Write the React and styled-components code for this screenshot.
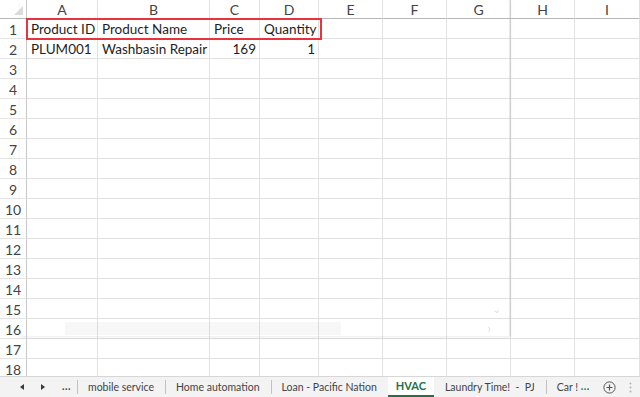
import styled, { createGlobalStyle } from 'styled-components';

const GlobalStyle = createGlobalStyle`
  html, body {
    margin: 0;
    padding: 0;
    background: #ffffff;
  }
  #root {
    width: 640px;
    height: 397px;
  }
`;

const COLS = [71, 112, 50, 59, 64, 64, 64, 64, 65];
const LETTERS = ['A', 'B', 'C', 'D', 'E', 'F', 'G', 'H', 'I'];
const ROWS = 18;

const DATA = {
  1: ['Product ID', 'Product Name', 'Price', 'Quantity'],
  2: ['PLUM001', 'Washbasin Repair', '169', '1'],
};

const RIGHT = { '169': true, '1': true };

const Window = styled.div`
  width: 640px;
  height: 397px;
  display: flex;
  flex-direction: column;
  overflow: hidden;
  font-family: Lato, 'Open Sans', sans-serif;
  position: relative;
`;

const SheetArea = styled.div`
  flex: 1;
  overflow: hidden;
  position: relative;
`;

const Grid = styled.div`
  display: grid;
  grid-template-columns: 27px ${COLS.map((c) => `${c}px`).join(' ')};
  grid-auto-rows: 20px;
  grid-template-rows: 19px;
`;

const Corner = styled.div`
  border-right: 1px solid #c8c8c8;
  border-bottom: 1px solid #b8b8b8;
  position: relative;
  &::after {
    content: '';
    position: absolute;
    right: 3px;
    bottom: 3px;
    border-style: solid;
    border-width: 0 0 9px 9px;
    border-color: transparent transparent #dcdcdc transparent;
  }
`;

const ColHead = styled.div`
  border-right: 1px solid #e0e0e0;
  border-bottom: 1px solid #b8b8b8;
  color: #444;
  font-size: 14px;
  display: flex;
  align-items: center;
  justify-content: center;
  padding-top: 1px;
`;

const RowHead = styled.div`
  border-right: 1px solid #c8c8c8;
  border-bottom: 1px solid #e4e4e4;
  color: #444;
  font-size: 14px;
  display: flex;
  align-items: center;
  justify-content: center;
  padding-top: 1px;
`;

const Cell = styled.div`
  border-right: 1px solid #e1e1e1;
  border-bottom: 1px solid #e1e1e1;
  font-size: 13.5px;
  color: #1e1e1e;
  display: flex;
  align-items: flex-end;
  justify-content: ${(p) => (p.$right ? 'flex-end' : 'flex-start')};
  padding: 0 3px 1px 4px;
  white-space: nowrap;
  overflow: hidden;
`;

const Highlight = styled.div`
  position: absolute;
  left: 26px;
  top: 18px;
  width: 296px;
  height: 22px;
  box-sizing: border-box;
  border: 2px solid #e8323c;
  pointer-events: none;
`;

const Ghost = styled.div`
  position: absolute;
  left: 20px;
  top: 0;
  width: 491px;
  height: 336px;
  box-sizing: border-box;
  border-right: 2px solid rgba(120, 120, 120, 0.16);
  box-shadow: 0 2px 3px rgba(0, 0, 0, 0.06);
  pointer-events: none;
  display: flex;
  flex-direction: column;
  justify-content: flex-end;
`;

const GhostScroll = styled.div`
  height: 16px;
  display: flex;
  align-items: center;
  padding-left: 45px;
`;

const GhostThumb = styled.div`
  width: 276px;
  height: 13px;
  background: rgba(200, 200, 200, 0.14);
`;

const GhostArrow = styled.span`
  margin-left: auto;
  margin-right: 18px;
  color: rgba(120, 120, 120, 0.25);
  font-size: 13px;
`;

const GhostDown = styled.span`
  position: absolute;
  right: 8px;
  bottom: 20px;
  color: rgba(120, 120, 120, 0.25);
  font-size: 11px;
`;

const TabBar = styled.div`
  height: 20px;
  flex: none;
  background: #f3f3f3;
  border-top: 1px solid #d6d6d6;
  display: flex;
  align-items: stretch;
  font-family: Lato, 'Open Sans', sans-serif;
  font-size: 10.5px;
  color: #444;
  position: relative;
  z-index: 2;
`;

const Nav = styled.div`
  display: flex;
  align-items: center;
  padding-left: 20px;
  gap: 17px;
  width: 57px;
  flex: none;
`;

const Tri = styled.span`
  width: 0;
  height: 0;
  border-top: 3px solid transparent;
  border-bottom: 3px solid transparent;
  ${(p) =>
    p.$left
      ? 'border-right: 4px solid #3a3a3a;'
      : 'border-left: 4px solid #3a3a3a;'}
`;

const Dots = styled.span`
  color: ${(p) => (p.$green ? '#217346' : '#444')};
  font-weight: bold;
  letter-spacing: 0.5px;
  line-height: 1;
  margin-top: -2px;
`;

const Tabs = styled.div`
  flex: 1;
  display: flex;
  overflow: hidden;
`;

const Tab = styled.div`
  display: flex;
  align-items: center;
  padding: 0 11px;
  position: relative;
  white-space: nowrap;
  flex: none;
  ${(p) =>
    p.$sep &&
    `&::before {
      content: '';
      position: absolute;
      left: 0;
      top: 3px;
      bottom: 3px;
      border-left: 1px solid #c2c2c2;
    }`}
  ${(p) =>
    p.$active &&
    `background: #ffffff;
     color: #217346;
     font-weight: bold;
     font-size: 11px;
     margin-top: -1px;
     border-bottom: 2px solid #217346;
     padding: 0 8px;`}
  ${(p) => p.$last && 'padding-right: 0;'}
`;

const Tools = styled.div`
  width: 44px;
  box-sizing: border-box;
  display: flex;
  align-items: center;
  gap: 13px;
  padding-left: 7px;
  flex: none;
`;

const PlusIcon = () => (
  <svg width="13" height="13" viewBox="0 0 13 13">
    <circle cx="6.5" cy="6.5" r="5.6" fill="none" stroke="#555" strokeWidth="1" />
    <path d="M6.5 3.5v6M3.5 6.5h6" stroke="#555" strokeWidth="1.2" />
  </svg>
);

const KebabIcon = () => (
  <svg width="3" height="11" viewBox="0 0 3 11">
    <circle cx="1.5" cy="1.5" r="1" fill="#b4b4b4" />
    <circle cx="1.5" cy="5.5" r="1" fill="#b4b4b4" />
    <circle cx="1.5" cy="9.5" r="1" fill="#b4b4b4" />
  </svg>
);

const App = () => {
  const rows = Array.from({ length: ROWS }, (_, i) => i + 1);

  return (
    <>
      <GlobalStyle />
      <Window>
        <SheetArea>
          <Grid>
            <Corner />
            {LETTERS.map((l) => (
              <ColHead key={l}>{l}</ColHead>
            ))}
            {rows.flatMap((r) => [
              <RowHead key={`h${r}`}>{r}</RowHead>,
              ...LETTERS.map((l, ci) => {
                const v = (DATA[r] || [])[ci] || '';
                return (
                  <Cell key={`${l}${r}`} $right={r === 2 && RIGHT[v]}>
                    {v}
                  </Cell>
                );
              }),
            ])}
          </Grid>
          <Ghost>
            <GhostDown>⌄</GhostDown>
            <GhostScroll>
              <GhostThumb />
              <GhostArrow>›</GhostArrow>
            </GhostScroll>
          </Ghost>
          <Highlight />
        </SheetArea>
        <TabBar>
          <Nav>
            <Tri $left />
            <Tri />
            <Dots>...</Dots>
          </Nav>
          <Tabs>
            <Tab $sep>mobile service</Tab>
            <Tab $sep>Home automation</Tab>
            <Tab $sep>Loan - Pacific Nation</Tab>
            <Tab $active>HVAC</Tab>
            <Tab>Laundry Time!&nbsp; -&nbsp; PJ</Tab>
            <Tab $sep $last>
              Car !&nbsp;<Dots $green>...</Dots>
            </Tab>
          </Tabs>
          <Tools>
            <PlusIcon />
            <KebabIcon />
          </Tools>
        </TabBar>
      </Window>
    </>
  );
};

export default App;
